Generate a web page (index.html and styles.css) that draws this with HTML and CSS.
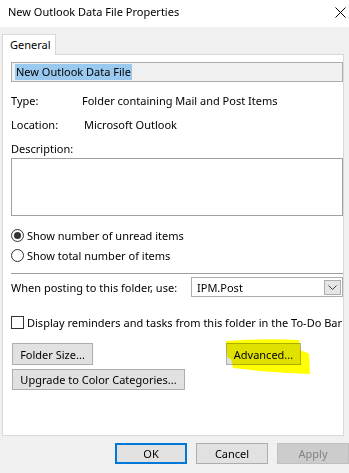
FILE: index.html
```html
<!DOCTYPE html>
<html lang="en">
  <head>
    <title>New Outlook Data File Properties</title>
    <meta charset="utf-8">
    <link rel="stylesheet" href="styles.css">
  </head>
  <body>
    <div class="window">

      <div class="titlebar">
        <span class="title">New Outlook Data File Properties</span>
        <svg class="close" width="11" height="11" viewBox="0 0 11 11">
          <path d="M0.5 0.5L10.5 10.5M10.5 0.5L0.5 10.5" stroke="#000" stroke-width="1" fill="none"/>
        </svg>
      </div>

      <div class="dialog">
        <div class="tabs">
          <div class="tab">General</div>
        </div>

        <div class="panel">
          <div class="name-box"><span class="selected">New Outlook Data File</span></div>

          <div class="info-row first">
            <span class="info-label">Type:</span>
            <span>Folder containing Mail and Post Items</span>
          </div>
          <div class="info-row">
            <span class="info-label">Location:</span>
            <span class="info-value-shift">Microsoft Outlook</span>
          </div>

          <div class="desc-label">Description:</div>
          <div class="desc-box"></div>

          <div class="radio-row first">
            <span class="radio checked"></span>
            <span>Show number of unread items</span>
          </div>
          <div class="radio-row">
            <span class="radio"></span>
            <span>Show total number of items</span>
          </div>

          <div class="separator"></div>

          <div class="posting-row">
            <span>When posting to this folder, use:</span>
            <div class="combo">
              <span>IPM.Post</span>
              <span class="combo-arrow">
                <svg width="9" height="5" viewBox="0 0 9 5">
                  <path d="M0.5 0.5L4.5 4.5L8.5 0.5" stroke="#404040" fill="none"/>
                </svg>
              </span>
            </div>
          </div>

          <div class="check-row">
            <span class="checkbox"></span>
            <span>Display reminders and tasks from this folder in the To-Do Bar</span>
          </div>

          <div class="button-row">
            <button class="btn folder-size">Folder Size...</button>
            <div class="marked">
              <button class="btn advanced">Advanced...</button>
              <!-- hand-drawn yellow highlight over the button -->
              <svg class="highlight" width="92" height="38" viewBox="0 0 92 38">
                <path d="M3 2 Q40 -1 76 1 L78 12 Q84 13 86 15 L87 35 Q60 34 36 32 Q20 30 10 29 L8 20 Q4 19 4 17 Z" fill="#ffff00"/>
              </svg>
            </div>
          </div>
          <button class="btn upgrade">Upgrade to Color Categories...</button>
        </div>

        <div class="dialog-buttons">
          <button class="btn default">OK</button>
          <button class="btn">Cancel</button>
          <button class="btn" disabled>Apply</button>
        </div>
      </div>

    </div>
  </body>
</html>
```

FILE: styles.css
```css
body {
  margin: 0;
  font-family: "Noto Sans", "Open Sans", sans-serif;
  font-size: 11px;
  color: #000;
}

.window {
  width: 349px;
  height: 473px;
  background-color: #f0f0f0;
  overflow: hidden;
}

.titlebar {
  background-color: #fff;
  height: 27px;
  display: flex;
  align-items: center;
  justify-content: space-between;
  padding: 0 3px 0 8px;
  box-sizing: border-box;
}

.title {
  font-size: 11px;
  margin-top: -4px;
}

.close {
  margin-top: -2px;
}

.dialog {
  padding: 7px 0 0 2px;
}

.tabs {
  display: flex;
  height: 20px;
}

.tab {
  width: 54px;
  height: 21px;
  box-sizing: border-box;
  background-color: #fff;
  border: 1px solid #d9d9d9;
  border-bottom: none;
  padding: 2px 0 0 7px;
  position: relative;
  z-index: 1;
}

.panel {
  width: 342px;
  height: 382px;
  box-sizing: border-box;
  background-color: #fff;
  border: 1px solid #d9d9d9;
  padding: 7px 0 0 8px;
}

.name-box {
  height: 20px;
  box-sizing: border-box;
  background-color: #f0f0f0;
  border: 1px solid #adadad;
  padding: 1px 0 0 3px;
}

.selected {
  background-color: #99c9ef;
  display: inline-block;
  line-height: 16px;
  padding: 0 1px;
}

.info-row {
  display: flex;
  line-height: 24px;
}

.info-row.first {
  margin-top: 7px;
}

.info-label {
  width: 71px;
}

.info-value-shift {
  margin-left: 2px;
}

.desc-label {
  margin-top: 3px;
  line-height: 18px;
}

.desc-box {
  height: 58px;
  box-sizing: border-box;
  border: 1px solid #a0a0a0;
}

.radio-row,
.check-row {
  display: flex;
  align-items: center;
  height: 20px;
}

.radio-row.first {
  margin-top: 9px;
}

.radio {
  width: 13px;
  height: 13px;
  box-sizing: border-box;
  border: 1px solid #333;
  border-radius: 50%;
  margin-right: 3px;
  position: relative;
}

.radio.checked::after {
  content: "";
  position: absolute;
  left: 2px;
  top: 2px;
  width: 7px;
  height: 7px;
  border-radius: 50%;
  background-color: #333;
}

.separator {
  margin-top: 8px;
  height: 1px;
  background-color: #a0a0a0;
}

.posting-row {
  display: flex;
  align-items: center;
  justify-content: space-between;
  margin-top: 3px;
}

.combo {
  width: 152px;
  height: 20px;
  box-sizing: border-box;
  border: 1px solid #adadad;
  display: flex;
  align-items: center;
  justify-content: space-between;
  padding: 0 1px 0 5px;
}

.combo-arrow {
  width: 17px;
  height: 15px;
  box-sizing: border-box;
  background-color: #e5e5e5;
  border: 1px solid #adadad;
  display: flex;
  align-items: center;
  justify-content: center;
}

.check-row {
  margin-top: 15px;
}

.checkbox {
  width: 13px;
  height: 13px;
  box-sizing: border-box;
  border: 1px solid #333;
  margin-right: 3px;
}

.btn {
  font-family: "Noto Sans", "Open Sans", sans-serif;
  font-size: 11px;
  color: #000;
  height: 22px;
  box-sizing: border-box;
  background-color: #e1e1e1;
  border: 1px solid #adadad;
  padding: 0;
  display: block;
  flex-shrink: 0;
}

.btn:disabled {
  background-color: #cccccc;
  border-color: #bfbfbf;
  color: #838383;
}

.button-row {
  display: flex;
  margin-top: 11px;
}

.folder-size {
  width: 81px;
  margin-left: 1px;
}

.marked {
  position: relative;
  margin-left: 133px;
}

.advanced {
  width: 75px;
}

.highlight {
  position: absolute;
  left: -3px;
  top: -4px;
  mix-blend-mode: multiply;
  pointer-events: none;
}

.upgrade {
  width: 173px;
  margin: 4px 0 0 1px;
  height: 21px;
}

.dialog-buttons {
  display: flex;
  gap: 9px;
  margin: 7px 0 0 113px;
}

.dialog-buttons .btn {
  width: 72px;
  height: 21px;
}

.dialog-buttons .default {
  border: 2px solid #0078d7;
}
```
